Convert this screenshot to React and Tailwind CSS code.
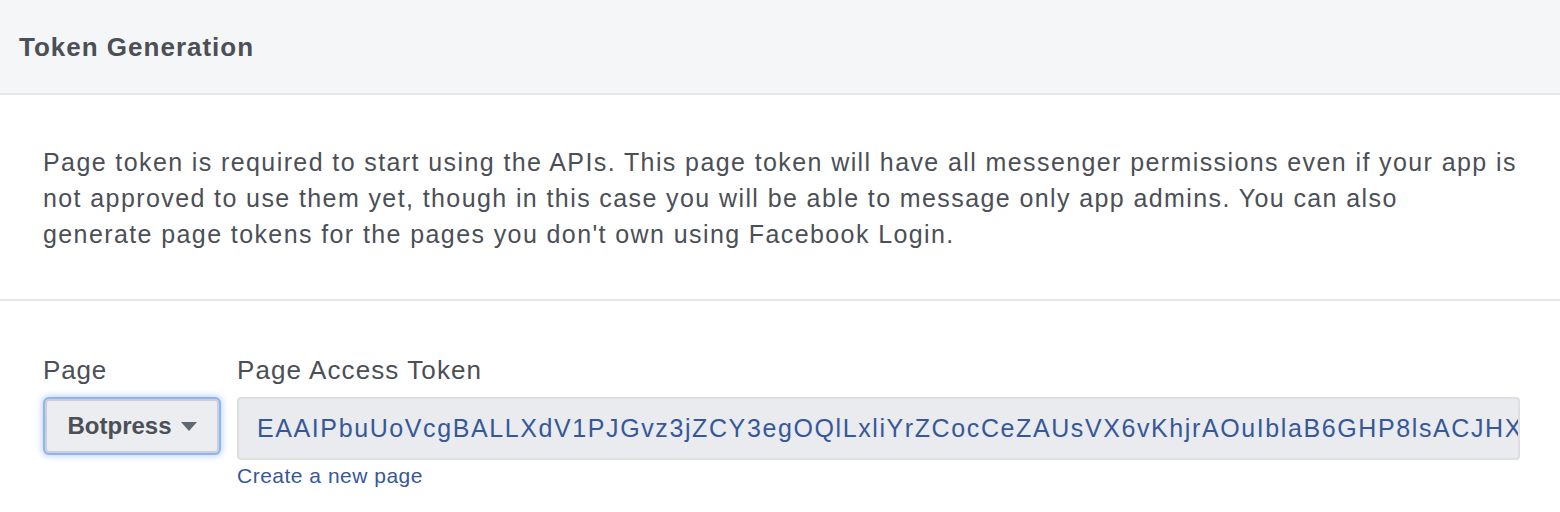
const TOKEN =
  "EAAIPbuUoVcgBALLXdV1PJGvz3jZCY3egOQlLxliYrZCocCeZAUsVX6vKhjrAOuIblaB6GHP8lsACJHXq9ZBZCoZAkx3hZAEq4ZB1";

const App = () => {
  return (
    <div className="w-[1560px] h-[512px] bg-white text-[#4b4f56] font-['Helvetica','Liberation_Sans',Arial,sans-serif] overflow-hidden">
      <div className="h-[95px] bg-[#f5f6f7] border-b-2 border-[#e5e6e9] flex items-center pl-[19px]">
        <h2 className="text-[26px] font-bold leading-none tracking-[1px]">Token Generation</h2>
      </div>

      <div className="pl-[43px] pr-[20px] pt-[49px] pb-[47px] border-b-2 border-[#e5e6e9]">
        <p className="text-[25px] leading-[36px] tracking-[1.4px] whitespace-nowrap">
          Page token is required to start using the APIs. This page token will have all messenger permissions even if your app is
          <br />
          not approved to use them yet, though in this case you will be able to message only app admins. You can also
          <br />
          generate page tokens for the pages you don't own using Facebook Login.
        </p>
      </div>

      <div className="flex pl-[43px] pr-[40px] pt-[51px] gap-[18px]">
        <div className="flex flex-col">
          <label className="text-[26px] leading-[36px] tracking-[0.8px]">Page</label>
          <button className="mt-[11px] ml-[2px] w-[174px] h-[54px] rounded-[4px] bg-[#ebedf0] border-2 border-[#ccd0d5] shadow-[0_0_0_2px_#8fb3f7,0_0_6px_3px_rgba(100,150,250,0.45)] flex items-center justify-center gap-[9px] text-[#4b4f56]">
            <span className="text-[24px] font-bold leading-none">Botpress</span>
            <svg width="16" height="10" viewBox="0 0 16 10" className="mt-[1px]">
              <path d="M0 0 H16 L8 9 Z" fill="#606770" />
            </svg>
          </button>
        </div>
        <div className="flex flex-col flex-1 min-w-0">
          <label className="text-[26px] leading-[36px] tracking-[1.1px]">Page Access Token</label>
          <div className="mt-[9px] h-[63px] rounded-[4px] bg-[#e9ebee] border-2 border-[#dddfe2] flex items-center pl-[18px] pr-[2px] overflow-hidden">
            <span className="text-[25px] tracking-[1.6px] text-[#365899] whitespace-nowrap leading-none">{TOKEN}</span>
          </div>
          <a href="#" className="text-[21px] leading-[30px] tracking-[0.5px] text-[#365899] mt-[1px] w-fit">
            Create a new page
          </a>
        </div>
      </div>
    </div>
  );
};

export default App;
